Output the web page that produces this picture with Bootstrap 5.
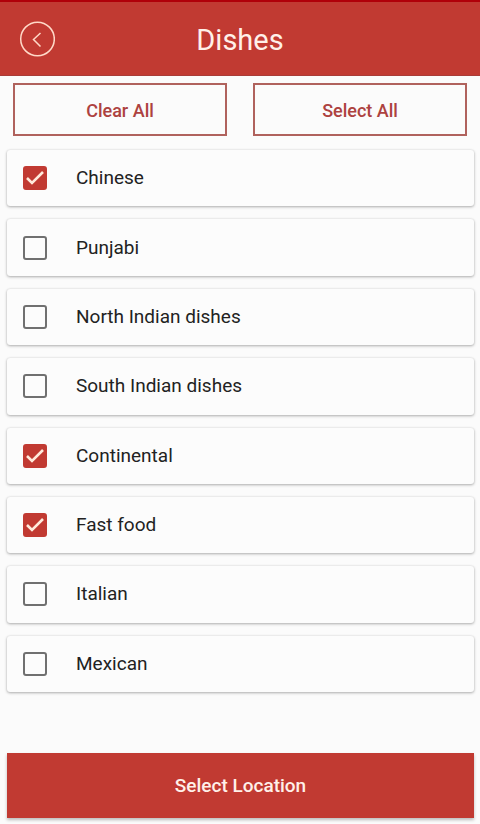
<!DOCTYPE html>
<html lang="en">
<head>
<meta charset="utf-8">
<meta name="viewport" content="width=device-width, initial-scale=1">
<title>Dishes</title>
<link href="https://cdn.jsdelivr.net/npm/bootstrap@5.3.0/dist/css/bootstrap.min.css" rel="stylesheet">
<style>
  :root { --brand: #c13a32; --brand-ink: #ad4240; --paper: #fbfbfb; }
  body { font-family: Roboto, "Liberation Sans", sans-serif; font-size: 19px; line-height: 24px; background: var(--paper); color: #222; }
  .app-header { background: var(--brand); border-top: 2px solid #b00009; border-bottom: 1px solid #a93c38; display: grid; grid-template-columns: 36px 1fr 36px; height: 76px; padding: 0 19px; }
  .app-header h1 { font-size: 29px; line-height: 36px; font-weight: 400; color: #fff0e9; padding-top: 2px; }
  .back-btn { width: 36px; height: 36px; color: #ffd9c8; }
  .action-row { gap: 26px; padding: 7px 13px 14px; }
  .btn { border-radius: 0; font-size: 18px; line-height: 24px; font-weight: 500; }
  .btn-frame { --bs-btn-color: var(--brand-ink); --bs-btn-border-color: #b0625d; --bs-btn-border-width: 2px; --bs-btn-hover-color: #fff; --bs-btn-hover-bg: var(--brand); height: 53px; padding-top: 8px; }
  .dish-list { display: grid; grid-auto-rows: 1fr; gap: 13px; margin: 0 6px 61px 7px; }
  .dish { min-height: 56px; border-radius: 3px; background: #fcfcfc; box-shadow: 0 1px 3px rgba(0,0,0,.3), 0 0 2px rgba(0,0,0,.1); padding: 0 16px; gap: 29px; }
  .dish .form-check-input { width: 24px; height: 24px; border: 2px solid #707070; border-radius: 3px; background-color: transparent; }
  .dish .form-check-input:checked { background-color: var(--brand); border-color: var(--brand); background-size: 24px 24px; background-image: url("data:image/svg+xml,%3Csvg xmlns='http://www.w3.org/2000/svg' viewBox='0 0 24 24'%3E%3Cpath d='M4 12l5 5L20 6' fill='none' stroke='%23ffeadb' stroke-width='2.6'/%3E%3C/svg%3E"); }
  .btn-location { --bs-btn-color: #fff0e9; --bs-btn-bg: var(--brand); --bs-btn-border-color: var(--brand); --bs-btn-hover-color: #fff; --bs-btn-hover-bg: #ab302a; font-size: 19px; height: 65px; margin: 0 6px 6px 7px; box-shadow: 0 2px 3px rgba(0,0,0,.25); }
</style>
</head>
<body>
<div class="d-flex flex-column min-vh-100">
  <header class="app-header align-items-center">
    <button type="button" class="back-btn btn border-0 p-0 d-flex" aria-label="Back">
      <svg width="36" height="36" viewBox="0 0 36 36" fill="none" stroke="currentColor" stroke-width="1.5" aria-hidden="true">
        <circle cx="18.5" cy="18" r="16.8"/>
        <path d="M21.5 12l-7 6.5 7 7"/>
      </svg>
    </button>
    <h1 class="text-center mb-0">Dishes</h1>
  </header>
  <main class="d-flex flex-column flex-grow-1">
    <div class="action-row d-flex">
      <button type="button" class="btn btn-frame flex-fill w-50">Clear All</button>
      <button type="button" class="btn btn-frame flex-fill w-50">Select All</button>
    </div>
    <div class="dish-list flex-grow-1">
      <label class="dish d-flex align-items-center" for="chinese"><input class="form-check-input m-0 flex-shrink-0" type="checkbox" id="chinese" checked><span>Chinese</span></label>
      <label class="dish d-flex align-items-center" for="punjabi"><input class="form-check-input m-0 flex-shrink-0" type="checkbox" id="punjabi"><span>Punjabi</span></label>
      <label class="dish d-flex align-items-center" for="north"><input class="form-check-input m-0 flex-shrink-0" type="checkbox" id="north"><span>North Indian dishes</span></label>
      <label class="dish d-flex align-items-center" for="south"><input class="form-check-input m-0 flex-shrink-0" type="checkbox" id="south"><span>South Indian dishes</span></label>
      <label class="dish d-flex align-items-center" for="continental"><input class="form-check-input m-0 flex-shrink-0" type="checkbox" id="continental" checked><span>Continental</span></label>
      <label class="dish d-flex align-items-center" for="fastfood"><input class="form-check-input m-0 flex-shrink-0" type="checkbox" id="fastfood" checked><span>Fast food</span></label>
      <label class="dish d-flex align-items-center" for="italian"><input class="form-check-input m-0 flex-shrink-0" type="checkbox" id="italian"><span>Italian</span></label>
      <label class="dish d-flex align-items-center" for="mexican"><input class="form-check-input m-0 flex-shrink-0" type="checkbox" id="mexican"><span>Mexican</span></label>
    </div>
    <button type="button" class="btn btn-location">Select Location</button>
  </main>
</div>
<script src="https://cdn.jsdelivr.net/npm/bootstrap@5.3.0/dist/js/bootstrap.bundle.min.js"></script>
</body>
</html>
